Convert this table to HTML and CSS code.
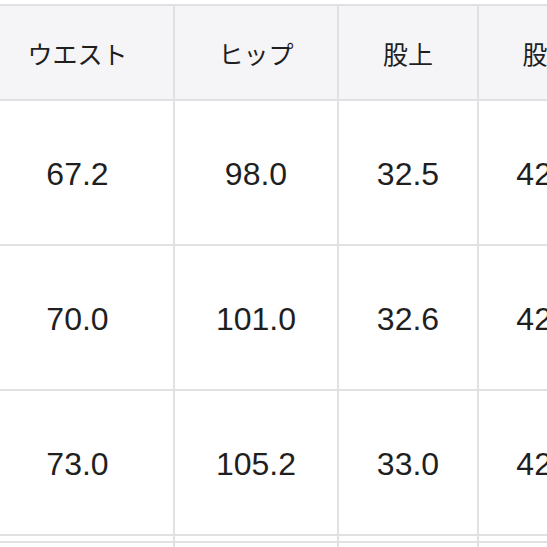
FILE: index.html
```html
<!DOCTYPE html>
<html lang="ja">
<head>
<meta charset="utf-8">
<link rel="stylesheet" href="styles.css">
</head>
<body>
<div class="frame">
  <table class="size-table">
    <colgroup>
      <col class="c1"><col class="c2"><col class="c3"><col class="c4">
    </colgroup>
    <thead>
      <tr><th>ウエスト</th><th>ヒップ</th><th>股上</th><th>股下</th></tr>
    </thead>
    <tbody>
      <tr><td>67.2</td><td>98.0</td><td>32.5</td><td>42.0</td></tr>
      <tr><td>70.0</td><td>101.0</td><td>32.6</td><td>42.0</td></tr>
      <tr><td>73.0</td><td>105.2</td><td>33.0</td><td>42.0</td></tr>
      <tr class="gap"><td></td><td></td><td></td><td></td></tr>
      <tr><td>76.0</td><td>108.0</td><td>33.4</td><td>42.0</td></tr>
    </tbody>
  </table>
</div>
</body>
</html>
```
FILE: styles.css
```css
html, body {
  margin: 0;
  padding: 0;
  background: #ffffff;
}
.frame {
  width: 547px;
  height: 547px;
  overflow: hidden;
  padding-top: 4px;
  box-sizing: border-box;
}
.size-table {
  margin-left: -20px;
  border-collapse: collapse;
  table-layout: fixed;
  width: 636px;
  color: #1f1f1f;
}
.c1 { width: 193px; }
.c2 { width: 164px; }
.c3 { width: 140px; }
.c4 { width: 139px; }
.size-table th,
.size-table td {
  border: 2px solid #e1e1e4;
  text-align: center;
  vertical-align: middle;
  padding: 0;
}
.size-table th {
  background: #f5f5f7;
  height: 93px;
  font-family: "Noto Sans CJK JP", "Noto Sans", sans-serif;
  font-weight: 400;
  font-size: 25px;
}
.size-table td {
  height: 140px;
  padding-top: 3px;
  font-family: "Liberation Sans", Arial, sans-serif;
  font-size: 32px;
}
.size-table tr.gap td {
  height: 5px;
  padding: 0;
}
```
